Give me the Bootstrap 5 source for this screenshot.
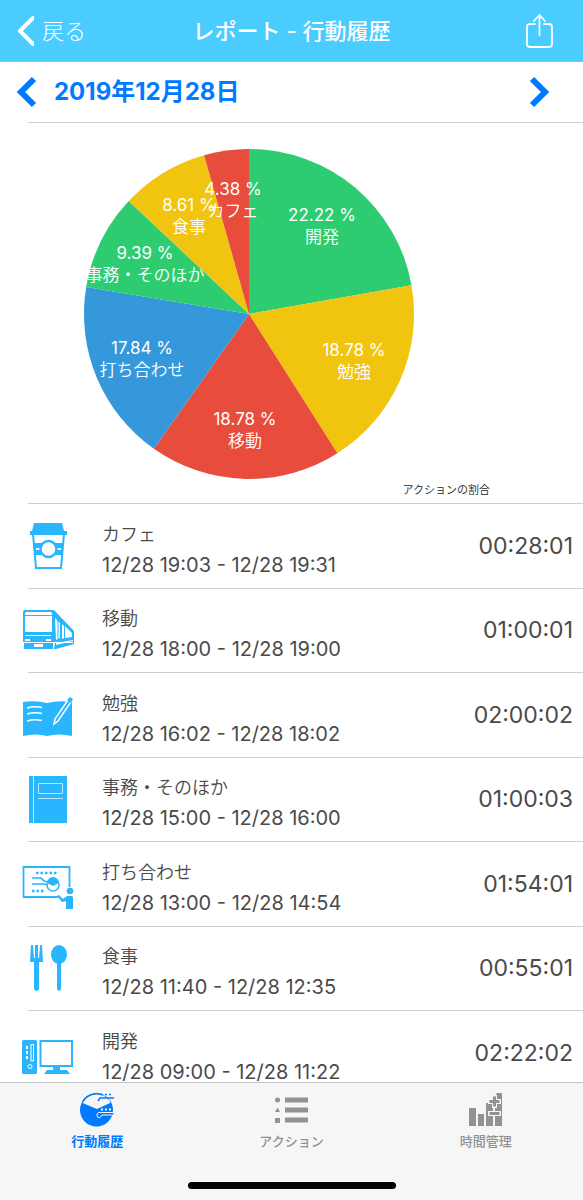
<!DOCTYPE html>
<html lang="ja">
<head>
<meta charset="utf-8">
<meta name="viewport" content="width=device-width, initial-scale=1">
<title>レポート - 行動履歴</title>
<link href="https://cdn.jsdelivr.net/npm/bootstrap@5.3.0/dist/css/bootstrap.min.css" rel="stylesheet">
<style>
  :root { --sky: #4accff; --ios-blue: #007aff; --icon-blue: #29b6ff; --line: #cfcfd1; }
  body { font-family: Inter, "Noto Sans CJK JP", sans-serif; color: #4a4a4a; background: #fff; }
  svg { display: block; }
  .top-bar { display: grid; grid-template-columns: 1fr auto 1fr; height: 62px; background: var(--sky); border-bottom: 1px solid #9db9c8; }
  .top-bar h1 { font-size: 22px; line-height: 28px; font-weight: 500; }
  .back-link { font-size: 22px; line-height: 28px; font-weight: 300; }
  .date-bar { height: 60px; color: var(--ios-blue); }
  .date-bar h2 { font-size: 24px; line-height: 28px; font-weight: 700; }
  .lined { background: linear-gradient(var(--line), var(--line)) 28px 0 / 100% 1px no-repeat; }
  .chart-area { height: 381px; padding: 27px 85px 0 0; }
  .pie text { fill: #fff; text-anchor: middle; font-size: 17px; font-weight: 350; }
  .pie .pct { font-weight: 400; }
  .chart-note { font-size: 11px; line-height: 14px; font-weight: 350; color: #222; }
  .log-list { display: grid; grid-auto-rows: 85px 84px; padding-bottom: 118px; }
  .log-row { gap: 28px; padding: 0 10px 0 22px; }
  .log-icon { width: 52px; height: 48px; flex: none; fill: var(--icon-blue); }
  .log-name { font-size: 18px; line-height: 30px; font-weight: 350; }
  .log-span { font-size: 20px; line-height: 30px; }
  .log-total { font-size: 23px; line-height: 30px; }
  .tab-bar { height: 118px; background: #f6f6f6; border-top: 1px solid #c4c4c4; }
  .tab-link { padding-top: 9px; font-size: 13px; line-height: 18px; font-weight: 500; color: #929292; }
  .tab-link.active { color: var(--ios-blue); font-weight: 700; }
  .home-pill { width: 208px; height: 7px; margin-bottom: 11px; }
</style>
</head>
<body>
<header class="top-bar align-items-center text-white">
  <a href="#" class="back-link d-flex align-items-center gap-2 ps-3 text-white text-decoration-none">
    <svg width="18" height="30" viewBox="0 0 18 30" fill="none" stroke="#fff" stroke-width="4" stroke-linecap="round" stroke-linejoin="round"><path d="M17 2 4 15 17 28"/></svg>
    <span>戻る</span>
  </a>
  <h1 class="m-0">レポート - 行動履歴</h1>
  <button type="button" class="btn border-0 p-0 ms-auto me-4 pe-1" aria-label="共有">
    <svg width="30" height="36" viewBox="0 0 30 36" fill="none" stroke="#fff" stroke-width="1.800" stroke-linecap="round" stroke-linejoin="round"><path d="M10 11H5q-3 0-3 3v17q0 3 3 3h19q3 0 3-3V14q0-3-3-3h-5M14.500 22V2M9 8l5.500-6L20 8"/></svg>
  </button>
</header>

<section class="date-bar d-flex align-items-center ps-3">
  <button type="button" class="btn border-0 p-0" aria-label="前の日">
    <svg width="22" height="32" viewBox="0 0 22 32" fill="none" stroke="#007aff" stroke-width="6"><path d="M18 3 5 16 18 29"/></svg>
  </button>
  <h2 class="m-0 ms-3">2019年12月28日</h2>
  <button type="button" class="btn border-0 p-0 ms-auto me-4 pe-2" aria-label="次の日">
    <svg width="22" height="32" viewBox="0 0 22 32" fill="none" stroke="#007aff" stroke-width="6"><path d="M3 3 16 16 3 29"/></svg>
  </button>
</section>

<main>
  <figure class="chart-area lined m-0">
    <svg class="pie mx-auto" width="330" height="330" viewBox="0 0 330 330" overflow="visible" role="img" aria-label="アクションの割合">
      <path fill="#2ecc71" d="M165 165V0A165 165 0 0 1 327.500 136.300Z"/>
      <path fill="#f1c40f" d="M165 165 327.500 136.300A165 165 0 0 1 253.400 304.300Z"/>
      <path fill="#e74c3c" d="M165 165 253.400 304.300A165 165 0 0 1 69.900 299.800Z"/>
      <path fill="#3498db" d="M165 165 69.900 299.800A165 165 0 0 1 2.200 138.100Z"/>
      <path fill="#2ecc71" d="M165 165 2.200 138.100A165 165 0 0 1 44.700 52.100Z"/>
      <path fill="#f1c40f" d="M165 165 44.700 52.100A165 165 0 0 1 120.100 6.200Z"/>
      <path fill="#e74c3c" d="M165 165 120.100 6.200A165 165 0 0 1 165 0Z"/>
      <text class="pct" x="238" y="72">22.22 %</text><text x="238" y="94">開発</text>
      <text class="pct" x="270" y="207">18.78 %</text><text x="270" y="229">勉強</text>
      <text class="pct" x="161" y="276">18.78 %</text><text x="161" y="298">移動</text>
      <text class="pct" x="58" y="205">17.84 %</text><text x="58" y="227">打ち合わせ</text>
      <text class="pct" x="61" y="110">9.39 %</text><text x="61" y="132">事務・そのほか</text>
      <text class="pct" x="105" y="62">8.61 %</text><text x="105" y="84">食事</text>
      <text class="pct" x="149" y="46">4.38 %</text><text x="149" y="68">カフェ</text>
    </svg>
    <figcaption class="chart-note text-end pe-2 pt-1">アクションの割合</figcaption>
  </figure>

  <ul class="log-list list-unstyled m-0">
    <li class="log-row lined d-flex align-items-center">
      <svg class="log-icon" viewBox="0 0 52 48"><path d="M12 1H40L42 9H45V13H8V9H10Z"/><path d="M11 12 14 46H39L42 12" fill="none" stroke="#29b6ff" stroke-width="2"/><path d="M11 21H41L40 33H13Z"/><path d="M14 26h4v2h-4zM35 26h4v2h-4z" fill="#fff"/><circle cx="26.500" cy="27" r="8" fill="#fff" stroke="#29b6ff" stroke-width="2.500"/></svg>
      <div class="pt-2"><div class="log-name">カフェ</div><div class="log-span">12/28 19:03 - 12/28 19:31</div></div>
      <div class="log-total ms-auto">00:28:01</div>
    </li>
    <li class="log-row lined d-flex align-items-center">
      <svg class="log-icon" viewBox="0 0 52 48"><path d="M3 4H32L52 25V38L34 43H2V37H1V6Q1 4 3 4Z"/><path d="M4 6H29Q30 6 30 8V9H3V7ZM3 10H30V26H3ZM4 29H29V30H3ZM3 33H8V35H3ZM24 33H29V35H24ZM1 36H51V37H1ZM12 38H21V41H12ZM31 37H33L32 43H31ZM33 12 38 17V32L34 34ZM40 18 42 20V32L40 33ZM43 20 50 27V31L43 32ZM34 37 51 34V35L34 39Z" fill="#fff"/><path d="M36 14v20" stroke="#29b6ff"/></svg>
      <div class="pt-2"><div class="log-name">移動</div><div class="log-span">12/28 18:00 - 12/28 19:00</div></div>
      <div class="log-total ms-auto">01:00:01</div>
    </li>
    <li class="log-row lined d-flex align-items-center">
      <svg class="log-icon" viewBox="0 0 52 48"><path d="M1 11Q14 9 25 12Q37 9 50 11V45Q37 42 25 45Q14 42 1 45Z"/><path d="M5 17Q12 15 20 16.500M5 23Q12 21 20 22.500M5 30Q12 28 20 29.500" fill="none" stroke="#fff" stroke-width="1.500"/><path d="M32 33 33 28 48 6 51 8 36 30Z" stroke="#fff" stroke-width="1.500"/><path d="m45 9 3-3 3 2-2 4Z"/></svg>
      <div class="pt-2"><div class="log-name">勉強</div><div class="log-span">12/28 16:02 - 12/28 18:02</div></div>
      <div class="log-total ms-auto">02:00:02</div>
    </li>
    <li class="log-row lined d-flex align-items-center">
      <svg class="log-icon" viewBox="0 0 52 48"><path d="M7 1H45V48H7Z"/><path d="M11.500 1V48M16.500 8.500H40.500V18.500H16.500ZM16 23.500H41" fill="none" stroke="#bce8ff"/></svg>
      <div class="pt-2"><div class="log-name">事務・そのほか</div><div class="log-span">12/28 15:00 - 12/28 16:00</div></div>
      <div class="log-total ms-auto">01:00:03</div>
    </li>
    <li class="log-row lined d-flex align-items-center">
      <svg class="log-icon" viewBox="0 0 52 48" overflow="visible"><path d="M36 37H1.500V7H47.500V27" fill="none" stroke="#29b6ff" stroke-width="1.800"/><path d="M14 13h21M10 31h12" stroke="#29b6ff" stroke-width="2.500" stroke-dasharray="2.500 2" fill="none"/><path d="M10 18H19Q22 22 27 22M10 24H23L27 26" fill="none" stroke="#29b6ff" stroke-width="1.500"/><circle cx="31" cy="25" r="6" fill="#fff" stroke="#29b6ff" stroke-width="1.500"/><path d="M25 23a6 6 0 0 1 12 0l-6 3ZM51 37V49H44V41L40 42 35 36 37 35 41 39 45 36H50Z"/><circle cx="48" cy="31" r="3.300"/></svg>
      <div class="pt-2"><div class="log-name">打ち合わせ</div><div class="log-span">12/28 13:00 - 12/28 14:54</div></div>
      <div class="log-total ms-auto">01:54:01</div>
    </li>
    <li class="log-row lined d-flex align-items-center">
      <svg class="log-icon" viewBox="0 0 52 48"><path d="M9 1H11L12 14H13V1H16V14H17L18 1H20L21 18H17V45Q14.500 49 12 45V18H8Z"/><ellipse cx="37" cy="10.500" rx="8" ry="9.500"/><path d="M35 18H39V45Q37 49 35 45Z"/></svg>
      <div class="pt-2"><div class="log-name">食事</div><div class="log-span">12/28 11:40 - 12/28 12:35</div></div>
      <div class="log-total ms-auto">00:55:01</div>
    </li>
    <li class="log-row lined d-flex align-items-center">
      <svg class="log-icon" viewBox="0 0 52 48"><rect y="11" width="15" height="34" rx="1.500"/><path d="M4 17h2v3H4zM4 22h2v3H4zM4 27h2v3H4z" fill="#fff"/><path d="M9 15.500h2.500V32H9Z" fill="none" stroke="#fff"/><circle cx="8" cy="37.500" r="2" fill="none" stroke="#fff"/><path d="M18.500 12H50V37H18.500Z" fill="none" stroke="#29b6ff" stroke-width="2"/><path d="M31 37h7v4h7l3 4H22l3-4h6Z"/></svg>
      <div class="pt-2"><div class="log-name">開発</div><div class="log-span">12/28 09:00 - 12/28 11:22</div></div>
      <div class="log-total ms-auto">02:22:02</div>
    </li>
  </ul>
</main>

<nav class="tab-bar fixed-bottom d-flex flex-column justify-content-between align-items-center">
  <div class="row g-0 w-100 text-center">
    <a href="#" class="tab-link active col text-decoration-none" aria-current="page">
      <svg class="mx-auto mb-1" width="36" height="36" viewBox="0 0 36 36"><circle cx="17.500" cy="18" r="16.500" fill="#007aff"/><path d="M3.500 11A16 16 0 0 1 31 9L31 11 18 17Z" fill="#f6f6f6"/><path d="M3.500 10A16.500 16.500 0 0 1 23 2.500" fill="none" stroke="#007aff" stroke-width="1.500"/><path d="M19 9 21 6H35M22 2.500h2m2 0h2m2 0h2" fill="none" stroke="#007aff" stroke-width="1.500"/><path d="M22 17.500h2m2 0h2m2 0h2" stroke="#f6f6f6" stroke-width="2"/><path d="M18 24V22L20 20.500H35V23H23L21 25.500H19Z" fill="#007aff" stroke="#f6f6f6"/></svg>
      <span>行動履歴</span>
    </a>
    <a href="#" class="tab-link col text-decoration-none">
      <svg class="mx-auto mb-1" width="36" height="36" viewBox="0 0 36 36" fill="#929292"><circle cx="4.500" cy="8" r="2.500"/><path d="M4.500 15.500 7 20H2ZM2 26h5v5H2zM12 5.500h23v5H12zM12 15.500h23v5H12zM12 25.500h23v5H12z"/></svg>
      <span>アクション</span>
    </a>
    <a href="#" class="tab-link col text-decoration-none">
      <svg class="mx-auto mb-1" width="36" height="36" viewBox="0 0 36 36" fill="#929292"><path d="M1 16h7v18H1zM10 22h6v12h-6zM18 11h7v23h-7zM27 4l2-3h5v33h-7z"/><path d="M20 9.500H33M26.500 3V16M20 21.500H33" stroke="#f6f6f6" stroke-width="5"/><path d="M21.500 9.500H31.500M26.500 4.500V14.500M21.500 21.500H31.500" stroke="#929292" stroke-width="3"/></svg>
      <span>時間管理</span>
    </a>
  </div>
  <div class="home-pill bg-black rounded-pill"></div>
</nav>
</body>
</html>
